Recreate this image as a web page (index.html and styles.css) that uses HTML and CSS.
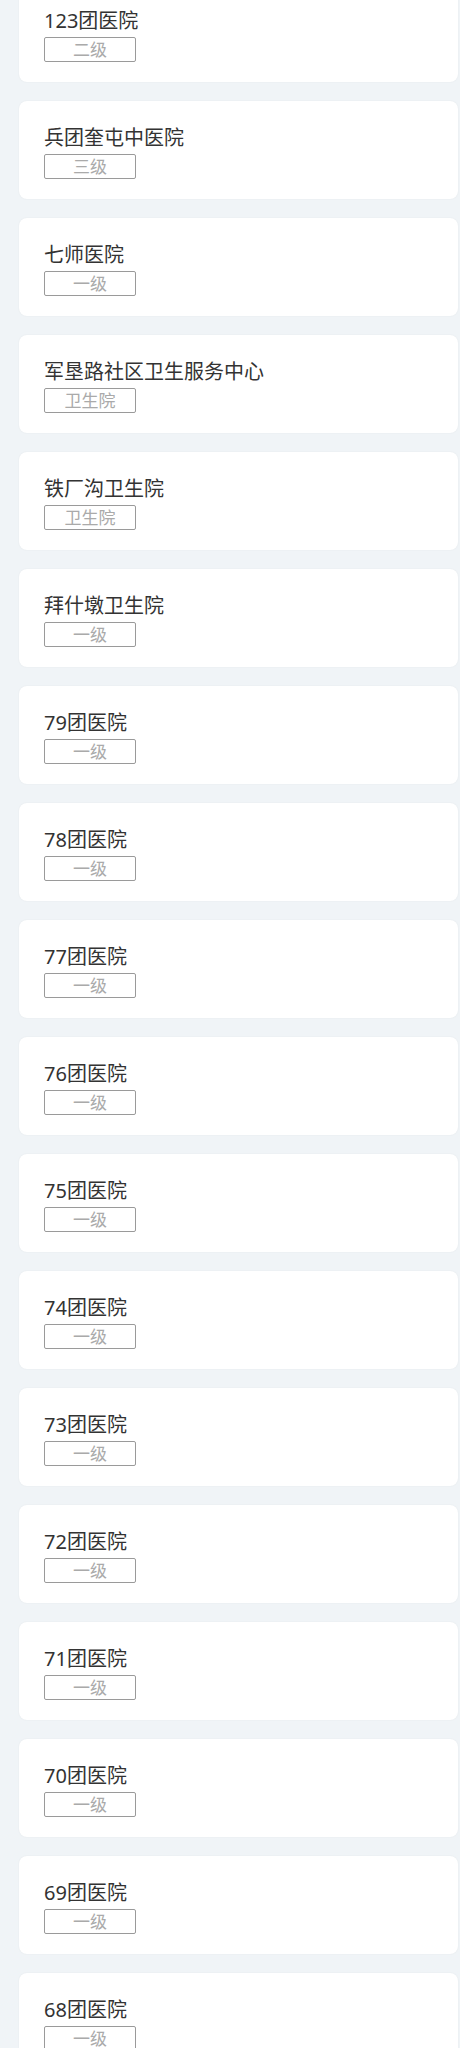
FILE: index.html
```html
<!DOCTYPE html>
<html lang="zh-CN">
<head>
<meta charset="utf-8">
<link rel="stylesheet" href="styles.css">
</head>
<body>
<div class="list">
  <div class="card"><div class="name">123团医院</div><div class="tag">二级</div></div>
  <div class="card"><div class="name">兵团奎屯中医院</div><div class="tag">三级</div></div>
  <div class="card"><div class="name">七师医院</div><div class="tag">一级</div></div>
  <div class="card"><div class="name">军垦路社区卫生服务中心</div><div class="tag">卫生院</div></div>
  <div class="card"><div class="name">铁厂沟卫生院</div><div class="tag">卫生院</div></div>
  <div class="card"><div class="name">拜什墩卫生院</div><div class="tag">一级</div></div>
  <div class="card"><div class="name">79团医院</div><div class="tag">一级</div></div>
  <div class="card"><div class="name">78团医院</div><div class="tag">一级</div></div>
  <div class="card"><div class="name">77团医院</div><div class="tag">一级</div></div>
  <div class="card"><div class="name">76团医院</div><div class="tag">一级</div></div>
  <div class="card"><div class="name">75团医院</div><div class="tag">一级</div></div>
  <div class="card"><div class="name">74团医院</div><div class="tag">一级</div></div>
  <div class="card"><div class="name">73团医院</div><div class="tag">一级</div></div>
  <div class="card"><div class="name">72团医院</div><div class="tag">一级</div></div>
  <div class="card"><div class="name">71团医院</div><div class="tag">一级</div></div>
  <div class="card"><div class="name">70团医院</div><div class="tag">一级</div></div>
  <div class="card"><div class="name">69团医院</div><div class="tag">一级</div></div>
  <div class="card"><div class="name">68团医院</div><div class="tag">一级</div></div>
</div>
</body>
</html>
```

FILE: styles.css
```css
html, body {
  margin: 0;
  padding: 0;
  background: #f0f4f7;
}
body {
  font-family: "Noto Sans", "Noto Sans CJK SC", sans-serif;
  overflow: hidden;
  height: 2048px;
}
.list {
  display: flex;
  flex-direction: column;
  gap: 19px;
  margin-top: -16px;
  padding-left: 19px;
  padding-right: 2px;
}
.card {
  box-sizing: border-box;
  height: 98px;
  background: #ffffff;
  border-radius: 8px;
  box-shadow: 0 0 2px rgba(0, 0, 0, 0.06);
  padding: 24px 0 0 25px;
  display: flex;
  flex-direction: column;
  align-items: flex-start;
}
.name {
  font-size: 20px;
  line-height: 26px;
  color: #333333;
  height: 26px;
  white-space: nowrap;
}
.tag {
  margin-top: 3px;
  box-sizing: border-box;
  width: 92px;
  height: 25px;
  border: 1px solid #9a9a9a;
  border-radius: 2px;
  color: #aaaaaa;
  font-size: 17px;
  line-height: 23px;
  text-align: center;
}
```
